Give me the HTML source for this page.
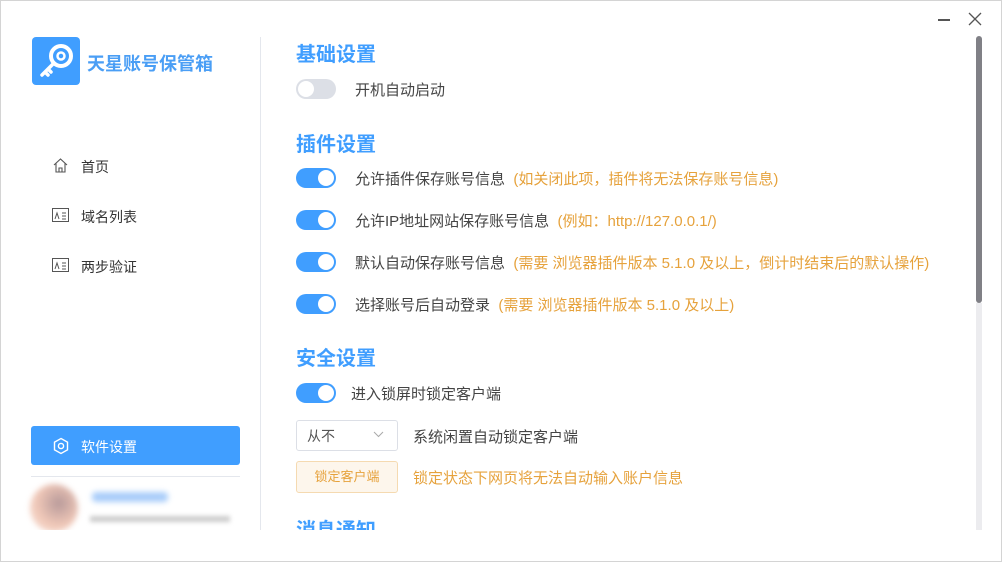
<!DOCTYPE html><html><head><meta charset="utf-8"><style>
*{margin:0;padding:0;box-sizing:border-box}
body{width:1002px;height:562px;overflow:hidden;background:#fff;font-family:"Liberation Sans","Noto Sans CJK SC",sans-serif;position:relative}
.a{position:absolute;white-space:nowrap}
.h{font-size:20px;font-weight:bold;color:#409eff;left:296px}
.t{font-size:15px;color:#444;left:355px}
.o{color:#e6a23c}
.sw{position:absolute;left:296px;width:40px;height:20px;border-radius:10px;background:#409eff}
.sw:after{content:"";position:absolute;top:2px;right:2px;width:16px;height:16px;border-radius:50%;background:#fff}
.sw.off{background:#dcdfe6}.sw.off:after{right:auto;left:2px}
.nav{font-size:14px;color:#333;left:81px}
</style></head><body>
<div class="a" style="left:32px;top:37px;width:48px;height:48px;border-radius:4px;background:#409eff">
<svg width="48" height="48" viewBox="0 0 48 48"><circle cx="29" cy="19" r="10" fill="none" stroke="#fff" stroke-width="4"/><circle cx="29" cy="19" r="3.5" fill="none" stroke="#fff" stroke-width="2.5"/><path d="M22 26 L10 38 M13 35 l3 3 M16 32 l3 3" stroke="#fff" stroke-width="3.5" stroke-linecap="round" fill="none"/></svg></div>
<div class="a" style="left:87px;top:50px;font-size:18px;font-weight:bold;color:#4a9ef5">天星账号保管箱</div>
<svg class="a" style="left:52px;top:157px" width="17" height="17" viewBox="0 0 17 17"><path d="M2 8 L8.5 2 L15 8 M4 6.5 V15 H13 V6.5 M7 15 V11 H10 V15" fill="none" stroke="#555" stroke-width="1.1"/></svg>
<div class="a nav" style="top:157px">首页</div>
<svg class="a" style="left:52px;top:208px" width="17" height="14" viewBox="0 0 17 14"><rect x=".5" y=".5" width="16" height="13" fill="none" stroke="#555"/><path d="M3 11 L5 5 L7 11 M10 5 H14 M10 8 H14 M10 11 H14" fill="none" stroke="#555"/></svg>
<div class="a nav" style="top:207px">域名列表</div>
<svg class="a" style="left:52px;top:258px" width="17" height="14" viewBox="0 0 17 14"><rect x=".5" y=".5" width="16" height="13" fill="none" stroke="#555"/><path d="M3 11 L5 5 L7 11 M10 5 H14 M10 8 H14 M10 11 H14" fill="none" stroke="#555"/></svg>
<div class="a nav" style="top:257px">两步验证</div>
<div class="a" style="left:31px;top:426px;width:209px;height:39px;border-radius:3px;background:#409eff"></div>
<svg class="a" style="left:52px;top:437px" width="18" height="18" viewBox="0 0 18 18"><path d="M9 1.5 L15.5 5.2 V12.8 L9 16.5 L2.5 12.8 V5.2 Z" fill="none" stroke="#fff" stroke-width="1.4"/><circle cx="9" cy="9" r="2.6" fill="none" stroke="#fff" stroke-width="1.4"/></svg>
<div class="a nav" style="top:437px;color:#fff">软件设置</div>
<div class="a" style="left:31px;top:476px;width:209px;height:1px;background:#e4e7ed"></div>
<div class="a" style="left:30px;top:484px;width:48px;height:48px;border-radius:50%;background:radial-gradient(circle at 60% 40%,#b89a9a,#f0c8b8 55%,#fbe9e0);filter:blur(3px)"></div>
<div class="a" style="left:92px;top:492px;width:76px;height:10px;background:#a9cdfa;filter:blur(3px);border-radius:4px"></div>
<div class="a" style="left:90px;top:516px;width:140px;height:6px;background:#ccc;filter:blur(2.5px)"></div>
<div class="a" style="left:260px;top:37px;width:1px;height:493px;background:#e4e7ed"></div>
<div class="a h" style="top:38px">基础设置</div>
<div class="sw off" style="top:79px"></div><div class="a t" style="top:79px">开机自动启动</div>
<div class="a h" style="top:128px">插件设置</div>
<div class="sw" style="top:168px"></div><div class="a t" style="top:168px">允许插件保存账号信息 <span class="o">&nbsp;(如关闭此项，插件将无法保存账号信息)</span></div>
<div class="sw" style="top:210px"></div><div class="a t" style="top:210px">允许IP地址网站保存账号信息 <span class="o">&nbsp;(例如：http://127.0.0.1/)</span></div>
<div class="sw" style="top:252px"></div><div class="a t" style="top:252px">默认自动保存账号信息 <span class="o">&nbsp;(需要 浏览器插件版本 5.1.0 及以上，倒计时结束后的默认操作)</span></div>
<div class="sw" style="top:294px"></div><div class="a t" style="top:294px">选择账号后自动登录 <span class="o">&nbsp;(需要 浏览器插件版本 5.1.0 及以上)</span></div>
<div class="a h" style="top:342px">安全设置</div>
<div class="sw" style="top:383px"></div><div class="a t" style="top:383px;left:351px">进入锁屏时锁定客户端</div>
<div class="a" style="left:296px;top:420px;width:102px;height:31px;border:1px solid #dcdfe6;border-radius:3px"></div>
<div class="a" style="left:307px;top:426px;font-size:14px;color:#555">从不</div>
<svg class="a" style="left:373px;top:431px" width="11" height="7" viewBox="0 0 11 7"><path d="M1 1 L5.5 5.5 L10 1" fill="none" stroke="#aaa"/></svg>
<div class="a t" style="left:413px;top:426px">系统闲置自动锁定客户端</div>
<div class="a" style="left:296px;top:461px;width:102px;height:32px;border:1px solid #f5dab1;background:#fdf6ec;border-radius:3px;color:#e6a23c;font-size:13px;text-align:center;line-height:30px">锁定客户端</div>
<div class="a t o" style="left:413px;top:467px">锁定状态下网页将无法自动输入账户信息</div>
<div class="a h" style="top:514px;height:16px;overflow:hidden">消息通知</div>
<div class="a" style="left:0;top:530px;width:1002px;height:32px;background:#fff"></div>
<div class="a" style="left:938px;top:19px;width:12px;height:1.5px;background:#555"></div>
<svg class="a" style="left:968px;top:12px" width="14" height="14" viewBox="0 0 14 14"><path d="M1 1 L13 13 M13 1 L1 13" stroke="#555" stroke-width="1.3"/></svg>
<div class="a" style="left:976px;top:36px;width:6px;height:267px;border-radius:3px;background:#808086"></div>
<div class="a" style="left:976px;top:303px;width:6px;height:227px;background:#ececef"></div>
<div class="a" style="left:0;top:0;width:1002px;height:562px;border:1px solid #d4d4d4"></div>
</body></html>
